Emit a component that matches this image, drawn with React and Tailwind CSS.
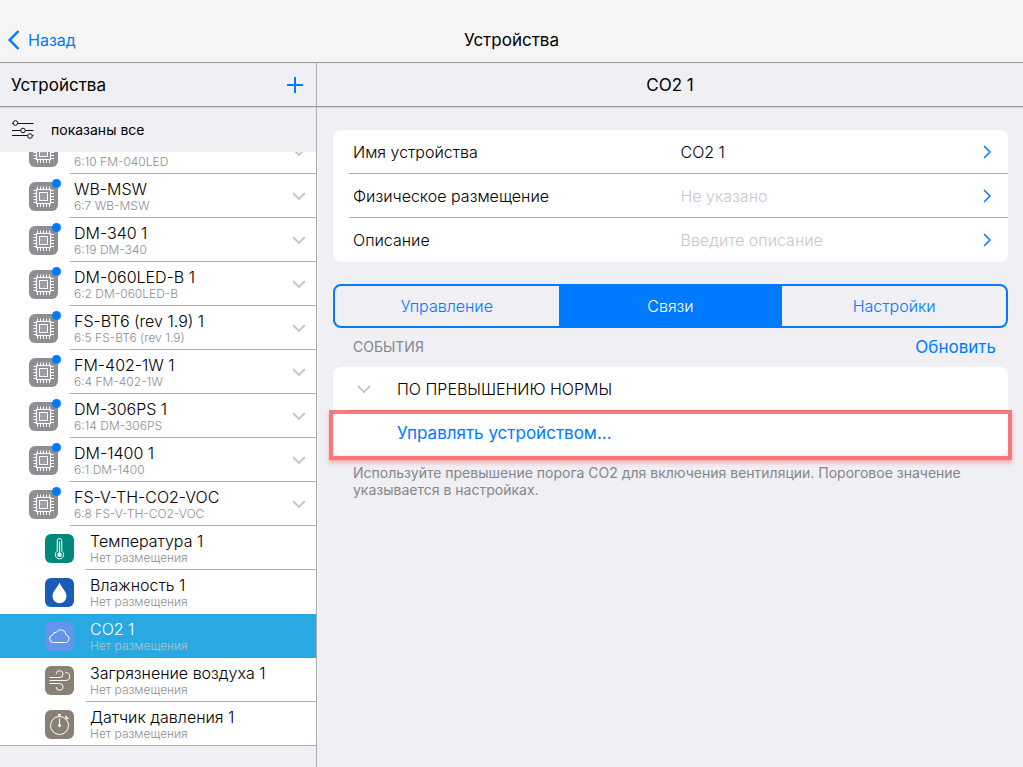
import { useState } from 'react'
import clsx from 'clsx'

const devices = [
  { name: '', address: '6:10 FM-040LED' },
  { name: 'WB-MSW', address: '6:7 WB-MSW' },
  { name: 'DM-340 1', address: '6:19 DM-340' },
  { name: 'DM-060LED-B 1', address: '6:2 DM-060LED-B' },
  { name: 'FS-BT6 (rev 1.9) 1', address: '6:5 FS-BT6 (rev 1.9)' },
  { name: 'FM-402-1W 1', address: '6:4 FM-402-1W' },
  { name: 'DM-306PS 1', address: '6:14 DM-306PS' },
  { name: 'DM-1400 1', address: '6:1 DM-1400' },
  { name: 'FS-V-TH-CO2-VOC', address: '6:8 FS-V-TH-CO2-VOC' }
]

const sensors = [
  { name: 'Температура 1', icon: ThermometerIcon, color: 'bg-[#00897b]' },
  { name: 'Влажность 1', icon: DropIcon, color: 'bg-[#1a5bb5]' },
  { name: 'CO2 1', icon: CloudIcon, color: 'bg-[#6495ed]' },
  { name: 'Загрязнение воздуха 1', icon: WindIcon, color: 'bg-[#8a8074]' },
  { name: 'Датчик давления 1', icon: StopwatchIcon, color: 'bg-[#8a8074]' }
]

const tabs = ['Управление', 'Связи', 'Настройки']

function Glyph({ children }) {
  return (
    <svg viewBox="0 0 29 29" className="size-[29px]" fill="none" stroke="#fff" aria-hidden="true">
      {children}
    </svg>
  )
}

function ChipIcon() {
  const pins = [8.5, 11.5, 14.5, 17.5, 20.5]
  return (
    <Glyph>
      <rect x="7.5" y="7.5" width="14" height="14" strokeWidth="1.200" />
      <rect x="10.5" y="10.5" width="8" height="8" fill="#fff" fillOpacity="0.15" />
      {pins.map(p => (
        <path key={p} d={`M${p} 4.500V7M${p} 22v3M4.500 ${p}H7M22 ${p}h3`} />
      ))}
    </Glyph>
  )
}

function ThermometerIcon() {
  return (
    <Glyph>
      <path d="M12.200 17.200V6.800a2.300 2.300 0 0 1 4.600 0v10.400a4.200 4.200 0 1 1-4.600 0z" />
      <path d="M14.500 7.500V20" strokeWidth="1.200" />
      <circle cx="14.500" cy="20.700" r="2.300" fill="#fff" stroke="none" />
    </Glyph>
  )
}

function DropIcon() {
  return (
    <Glyph>
      <path
        d="M14.500 4.500C13.500 8.500 7.500 13 7.500 18.200a7 7 0 0 0 14 0C21.500 13 15.500 8.500 14.500 4.500z"
        fill="#fff"
        stroke="none"
      />
    </Glyph>
  )
}

function CloudIcon() {
  return (
    <Glyph>
      <path d="M8.200 20.500a3.800 3.800 0 0 1-.6-7.500 3.200 3.200 0 0 1 3.600-2.600 5.200 5.200 0 0 1 9.700 2.400 4 4 0 0 1 .3 7.700z" />
    </Glyph>
  )
}

function WindIcon() {
  return (
    <Glyph>
      <path d="M4.500 11.500h10.200a3.400 3.400 0 1 0-3.500-3.600" />
      <path d="M4.500 14.500h16.300a4 4 0 1 0-.3-8" />
      <path d="M4.500 17.500h10.200a3.400 3.400 0 1 1-3.500 3.500" />
    </Glyph>
  )
}

function StopwatchIcon() {
  return (
    <Glyph>
      <circle cx="14.500" cy="15.500" r="9" />
      <path d="M14.500 8.500v8" />
      <circle cx="14.500" cy="15.500" r="1.400" fill="#fff" stroke="none" />
      <path d="M13 4.700h3M14.500 4.500V7" strokeWidth="1.300" />
      <path d="M20.300 6l3.200 3.200M20.500 9l1.500-1.500" strokeWidth="1.200" />
    </Glyph>
  )
}

function ChevronDown() {
  return (
    <svg viewBox="0 0 14 8" className="h-2 w-3.5 shrink-0" fill="none" stroke="#c7c7cc" strokeWidth="2" aria-hidden="true">
      <path d="M1 1l6 6 6-6" />
    </svg>
  )
}

function ChevronRight() {
  return (
    <svg viewBox="0 0 8 14" className="mr-[17px] h-3.5 w-2 shrink-0" fill="none" stroke="#007aff" strokeWidth="1.500" aria-hidden="true">
      <path d="M1 1l6 6-6 6" />
    </svg>
  )
}

function DeviceRow({ device }) {
  return (
    <li>
      <button className="flex h-11 w-full pl-[29px] text-left">
        <span className="relative mt-2 size-[29px] shrink-0 rounded-md bg-[#8e8e93]">
          <ChipIcon />
          <span className="absolute -top-[3px] -right-[3px] size-[9px] rounded-full bg-[#007aff]" />
        </span>
        <span className="ml-3 flex h-11 flex-1 items-center border-b border-[#adadb1] pr-2.5 pl-1">
          <span className="flex-1">
            <span className="block h-5 text-base leading-5">{device.name}</span>
            <span className="block text-xs leading-[14px] text-[#8e8e93]">{device.address}</span>
          </span>
          <ChevronDown />
        </span>
      </button>
    </li>
  )
}

function SensorRow({ sensor, selected, isLast, hideBorder, onSelect }) {
  const Icon = sensor.icon

  return (
    <li className={clsx(isLast && 'border-b border-[#adadb1]')}>
      <button
        onClick={onSelect}
        className={clsx('flex w-full pl-[45px] text-left', isLast ? 'h-[43px]' : 'h-11', selected && 'bg-[#28a9e2] text-white')}
      >
        <span className={clsx('mt-2 size-[29px] shrink-0 rounded-md', sensor.color)}>
          <Icon />
        </span>
        <span
          className={clsx(
            'ml-3 flex h-11 flex-1 flex-col justify-center border-b pl-1',
            hideBorder ? 'border-transparent' : 'border-[#adadb1]'
          )}
        >
          <span className="block text-base leading-5">{sensor.name}</span>
          <span className={clsx('block text-xs leading-[14px]', selected ? 'text-[#b5c3cc]' : 'text-[#8e8e93]')}>
            Нет размещения
          </span>
        </span>
      </button>
    </li>
  )
}

function Sidebar() {
  const [selected, setSelected] = useState(2)
  const lastIndex = sensors.length - 1

  return (
    <aside className="flex w-[317px] shrink-0 flex-col border-r border-[#adadb1]">
      <div className="flex h-11 shrink-0 items-center justify-between border-b border-[#999999] pr-[13px] pl-[11px]">
        <h2 className="text-[17px] leading-6 font-normal">Устройства</h2>
        <button aria-label="Добавить">
          <svg viewBox="0 0 16 16" className="size-4" stroke="#007aff" strokeWidth="2" aria-hidden="true">
            <path d="M8 0v16M0 8h16" />
          </svg>
        </button>
      </div>
      <button className="flex h-[45px] shrink-0 items-center gap-[17px] border-t border-[#d4d4d8] pl-3 text-left text-sm font-normal">
        <svg viewBox="0 0 22 20" className="h-5 w-[22px]" fill="none" stroke="#111" aria-hidden="true">
          <path d="M0 3.500h1M6 3.500h15.500M0 10.500h8.500M13.500 10.500h8M0 15.500h15.500M20.500 15.500h1" />
          <circle cx="3.500" cy="3" r="2.300" />
          <circle cx="11" cy="10.500" r="2.300" />
          <circle cx="18" cy="16" r="2.300" />
        </svg>
        показаны все
      </button>
      <div className="min-h-0 flex-1 overflow-hidden">
        {/* the list is scrolled by half a row */}
        <ul className="-mt-[22px] bg-white">
          {devices.map(device => (
            <DeviceRow key={device.address} device={device} />
          ))}
          {sensors.map((sensor, index) => (
            <SensorRow
              key={sensor.name}
              sensor={sensor}
              selected={selected === index}
              isLast={index === lastIndex}
              hideBorder={index === lastIndex || index === selected || index === selected - 1}
              onSelect={() => setSelected(index)}
            />
          ))}
        </ul>
      </div>
    </aside>
  )
}

function DetailsCard() {
  return (
    <div className="rounded-lg bg-white pl-4 text-base">
      <div className="flex h-11 items-center border-b border-[#adadb1] pl-1">
        <label htmlFor="name" className="w-1/2">Имя устройства</label>
        <input id="name" defaultValue="CO2 1" className="min-w-0 flex-1 outline-none" />
        <ChevronRight />
      </div>
      <div className="flex h-11 items-center border-b border-[#adadb1] pl-1">
        <label htmlFor="place" className="w-1/2">Физическое размещение</label>
        <button id="place" className="flex flex-1 items-center justify-between text-left text-[#c7c7cc]">
          Не указано
          <ChevronRight />
        </button>
      </div>
      <div className="flex h-11 items-center pl-1">
        <label htmlFor="description" className="w-1/2">Описание</label>
        <input
          id="description"
          placeholder="Введите описание"
          className="min-w-0 flex-1 outline-none placeholder:text-[#c7c7cc]"
        />
        <ChevronRight />
      </div>
    </div>
  )
}

export default function App() {
  const [activeTab, setActiveTab] = useState('Связи')

  return (
    <div className="flex h-screen flex-col bg-[#efeff4] font-['Inter','Liberation_Sans',sans-serif] font-light text-black">
      <header className="grid h-[63px] shrink-0 grid-cols-3 items-end border-b border-[#999999] bg-[#f5f5f5] pb-2.5">
        <a href="#" className="ml-2 flex items-center gap-2 text-base font-normal text-[#007aff]">
          <svg viewBox="0 0 12 20" className="h-5 w-3" fill="none" stroke="#007aff" strokeWidth="2.500" aria-hidden="true">
            <path d="M10.500 1L1.700 10l8.800 9" />
          </svg>
          Назад
        </a>
        <h1 className="text-center text-[17px] leading-6 font-normal">Устройства</h1>
      </header>

      <div className="flex min-h-0 flex-1">
        <Sidebar />

        <main className="min-w-0 flex-1">
          <div className="flex h-11 items-center justify-center border-b border-[#999999]">
            <h2 className="text-[17px] leading-6 font-normal">CO2 1</h2>
          </div>

          <div className="border-t border-[#d4d4d8] pt-[22px] pr-[15px] pl-4">
            <DetailsCard />

            <div role="tablist" className="mt-[22px] grid h-11 grid-cols-3 overflow-hidden rounded-lg border-2 border-[#007aff]">
              {tabs.map(tab => (
                <button
                  key={tab}
                  role="tab"
                  aria-selected={activeTab === tab}
                  onClick={() => setActiveTab(tab)}
                  className={clsx('text-base', activeTab === tab ? 'bg-[#007aff] text-white' : 'text-[#007aff]')}
                >
                  {tab}
                </button>
              ))}
            </div>

            <div className="flex h-[39px] items-center justify-between pr-3 pb-0.5 pl-5">
              <h3 className="text-sm font-normal text-[#86868b]">СОБЫТИЯ</h3>
              <button className="text-[17px] leading-6 font-normal text-[#007aff]">Обновить</button>
            </div>

            <section className="rounded-lg bg-white">
              <button className="flex h-11 w-full pl-4 text-left text-base">
                <span className="flex h-11 flex-1 items-center gap-[26px] border-b border-[#adadb1] pl-2">
                  <ChevronDown />
                  ПО ПРЕВЫШЕНИЮ НОРМЫ
                </span>
              </button>
              <div className="relative">
                <button className="h-11 w-full pl-16 text-left text-[17px] leading-6 font-normal text-[#007aff]">
                  Управлять устройством...
                </button>
                <div className="pointer-events-none absolute -inset-x-1 -top-px -bottom-[5px] border-4 border-[#ff4d4d]/75 shadow-[0_3px_4px_rgba(255,77,77,0.4)]" />
              </div>
            </section>

            <p className="mt-[9px] pr-4 pl-5 text-sm leading-[17px] font-normal text-[#86868b]">
              Используйте превышение порога CO2 для включения вентиляции. Пороговое значение указывается в настройках.
            </p>
          </div>
        </main>
      </div>
    </div>
  )
}
